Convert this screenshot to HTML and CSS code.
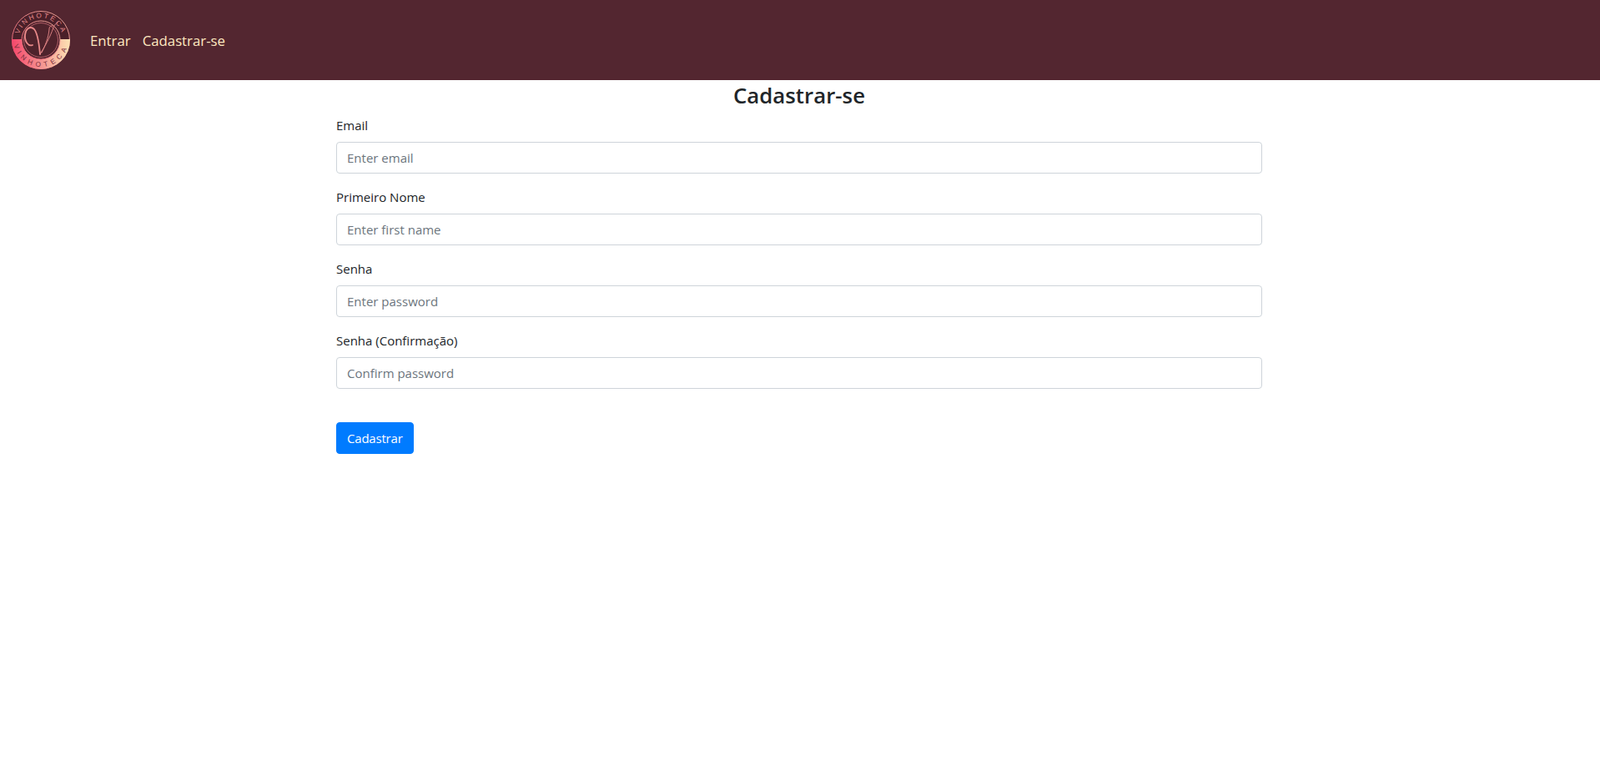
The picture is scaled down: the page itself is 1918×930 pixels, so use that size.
FILE: index.html
```html
<!DOCTYPE html>
<html lang="en">
<head>
  <meta charset="UTF-8">
  <meta name="viewport" content="width=device-width, initial-scale=1.0">
  <title>Cadastrar-se</title>
  <link rel="stylesheet" href="styles.css">
</head>
<body>
  <!-- Top navigation -->
  <nav class="navbar">
    <svg class="logo" viewBox="0 0 70 70" role="img" aria-label="Vinhoteca">
      <defs>
        <linearGradient id="band" x1="0" y1="0" x2="1" y2="0">
          <stop offset="0" stop-color="#f5476c"/>
          <stop offset="0.55" stop-color="#f59a94"/>
          <stop offset="1" stop-color="#fde3b4"/>
        </linearGradient>
        <linearGradient id="rim" x1="0" y1="1" x2="1" y2="0">
          <stop offset="0" stop-color="#e8566f"/>
          <stop offset="1" stop-color="#e9a99a"/>
        </linearGradient>
        <clipPath id="lower"><rect x="0" y="34" width="70" height="36"/></clipPath>
        <path id="arc-top" d="M 9 40 A 26.5 26.5 0 1 1 61 40"/>
        <path id="arc-bottom" d="M 2 34 A 33 33 0 0 0 68 34"/>
      </defs>
      <circle cx="35" cy="35" r="34.5" fill="#4a2029" stroke="url(#rim)" stroke-width="1"/>
      <circle cx="35" cy="35" r="35" fill="url(#band)" clip-path="url(#lower)"/>
      <circle cx="35" cy="35" r="23" fill="#4f232c" stroke="url(#rim)" stroke-width="1"/>
      <circle cx="35" cy="35" r="20.5" fill="none" stroke="#d9767f" stroke-width="0.7"/>
      <text class="logo-text logo-text-top"><textPath href="#arc-top" startOffset="50%" text-anchor="middle">VINHOTECA</textPath></text>
      <text class="logo-text logo-text-bottom"><textPath href="#arc-bottom" startOffset="50%" text-anchor="middle">VINHOTECA</textPath></text>
      <path class="logo-swirl" d="M 34 52 C 33 42 32 28 27 22 C 23 18 17 20 16 29 C 15.5 37 20 43 25 41"/>
      <path class="logo-swirl-thin" d="M 34 52 C 39 44 46 32 50 20 C 51 17 53 15 55 14"/>
      <path class="logo-swirl-thin" d="M 36 50 C 40 42 44 33 45 22 C 45 19 47 17 50 18"/>
    </svg>
    <a class="nav-link" href="#">Entrar</a>
    <a class="nav-link" href="#">Cadastrar-se</a>
  </nav>

  <!-- Sign up form -->
  <main class="container">
    <h3 class="title">Cadastrar-se</h3>
    <form>
      <div class="form-group">
        <label for="email">Email</label>
        <input type="email" id="email" class="form-control" placeholder="Enter email">
      </div>
      <div class="form-group">
        <label for="firstName">Primeiro Nome</label>
        <input type="text" id="firstName" class="form-control" placeholder="Enter first name">
      </div>
      <div class="form-group">
        <label for="password1">Senha</label>
        <input type="password" id="password1" class="form-control" placeholder="Enter password">
      </div>
      <div class="form-group">
        <label for="password2">Senha (Confirmação)</label>
        <input type="password" id="password2" class="form-control" placeholder="Confirm password">
      </div>
      <button type="submit" class="btn">Cadastrar</button>
    </form>
  </main>
</body>
</html>
```
FILE: styles.css
```css
/* General styles */
* {
  box-sizing: border-box;
}

body {
  margin: 0;
  font-family: "Open Sans", "Noto Sans", sans-serif;
  font-size: 15px;
  line-height: 24px;
  color: #212529;
  background-color: #fff;
}

/* Navbar */
.navbar {
  display: flex;
  align-items: center;
  height: 96px;
  padding: 0 14px;
  background-color: #532630;
}

.logo {
  width: 70px;
  height: 70px;
  margin-right: 16px;
}

.logo-text {
  font-family: "Liberation Sans", sans-serif;
  font-size: 8.2px;
}

.logo-text-top {
  fill: #e58a8d;
  letter-spacing: 2.4px;
}

.logo-text-bottom {
  fill: #7a2e3c;
  letter-spacing: 4.6px;
}

.logo-swirl,
.logo-swirl-thin {
  fill: none;
  stroke: #e98a8a;
  stroke-linecap: round;
}

.logo-swirl {
  stroke-width: 1.8;
}

.logo-swirl-thin {
  stroke-width: 0.9;
}

.nav-link {
  padding: 1px 8px 0;
  font-size: 16.8px;
  color: #ffe9c0;
  text-decoration: none;
}

.nav-link + .nav-link {
  padding-left: 6px;
}

/* Main container */
.container {
  width: 1110px;
  margin-left: 403px;
}

.title {
  height: 42px;
  margin: 0;
  padding-top: 1px;
  font-size: 25.8px;
  line-height: 34px;
  font-weight: 600;
  text-align: center;
}

/* Form */
.form-group {
  margin-bottom: 16px;
}

.form-group label {
  display: block;
  margin-bottom: 8px;
}

.form-control {
  display: block;
  width: 100%;
  height: 38px;
  padding: 6px 12px;
  font: inherit;
  color: #495057;
  border: 1px solid #ced4da;
  border-radius: 4px;
}

.form-control::placeholder {
  color: #6c757d;
  opacity: 1;
}

.btn {
  height: 38px;
  margin-top: 24px;
  padding: 6px 12px;
  font: inherit;
  letter-spacing: -0.2px;
  color: #fff;
  background-color: #007bff;
  border: 1px solid #007bff;
  border-radius: 4px;
  cursor: pointer;
}
```
